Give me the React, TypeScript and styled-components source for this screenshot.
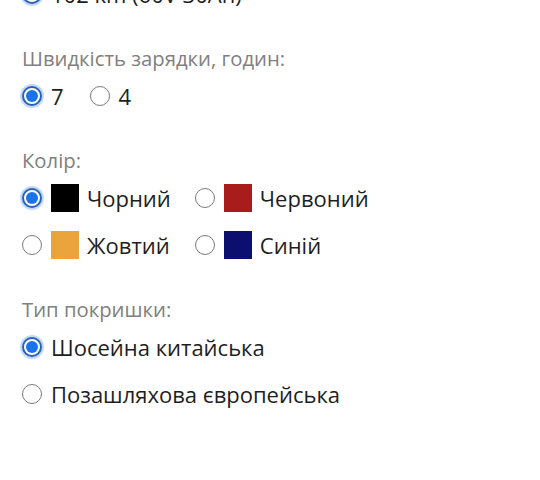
import React, { useState } from "react";
import styled, { createGlobalStyle } from "styled-components";

const GlobalStyle = createGlobalStyle`
  html, body {
    margin: 0;
    padding: 0;
    background: #ffffff;
    overflow: hidden;
  }
  body {
    font-family: "Open Sans", "Noto Sans", sans-serif;
    color: #222222;
  }
`;

// the page is shown scrolled a little, so the first group starts above the top edge
const Page = styled.div`
  padding: 0 22px;
  margin-top: -58px;
`;

const Section = styled.fieldset`
  border: 0;
  margin: 0 0 27px;
  padding: 0;
  min-width: 0;
`;

const Label = styled.div`
  font-size: 20.3px;
  line-height: 28px;
  color: #808080;
`;

const Inline = styled.div`
  display: flex;
  column-gap: 26px;
`;

const Grid = styled.div`
  display: grid;
  grid-template-columns: auto auto;
  justify-content: start;
  column-gap: 24px;
`;

const Option = styled.label`
  display: flex;
  align-items: center;
  height: 47px;
  font-size: 22px;
  color: #1e1e1e;
  cursor: pointer;
`;

const Radio = styled.input.attrs({ type: "radio" })`
  appearance: none;
  margin: 0 9px 0 0;
  width: 20px;
  height: 20px;
  flex: none;
  border-radius: 50%;
  border: 1px solid #7a7a7a;
  background: #ffffff;
  display: grid;
  place-items: center;
  cursor: pointer;

  &:checked {
    border: 2px solid #2a62b8;
    box-shadow: 0 0 0 2px rgba(120, 170, 240, 0.45);
  }
  &:checked::after {
    content: "";
    width: 12px;
    height: 12px;
    border-radius: 50%;
    background: #1a73e8;
  }
`;

const Swatch = styled.span<{ $color: string }>`
  width: 28px;
  height: 28px;
  flex: none;
  margin-right: 8px;
  background: ${(p) => p.$color};
`;

const range = ["102 km (60V 30Ah)"];
const charge = ["7", "4"];
const colors = [
  { name: "Чорний", hex: "#000000" },
  { name: "Червоний", hex: "#a81c1c" },
  { name: "Жовтий", hex: "#eba43c" },
  { name: "Синій", hex: "#0c0f6e" },
];
const tires = ["Шосейна китайська", "Позашляхова європейська"];

export default function App() {
  const [rng, setRng] = useState(range[0]);
  const [chg, setChg] = useState("7");
  const [col, setCol] = useState("Чорний");
  const [tire, setTire] = useState(tires[0]);

  return (
    <>
      <GlobalStyle />
      <Page>
        <Section>
          <Label>Запас ходу:</Label>
          {range.map((r) => (
            <Option key={r}>
              <Radio name="range" checked={rng === r} onChange={() => setRng(r)} />
              {r}
            </Option>
          ))}
        </Section>

        <Section>
          <Label>Швидкість зарядки, годин:</Label>
          <Inline>
            {charge.map((c) => (
              <Option key={c}>
                <Radio name="charge" checked={chg === c} onChange={() => setChg(c)} />
                {c}
              </Option>
            ))}
          </Inline>
        </Section>

        <Section>
          <Label>Колір:</Label>
          <Grid>
            {colors.map((c) => (
              <Option key={c.name}>
                <Radio name="color" checked={col === c.name} onChange={() => setCol(c.name)} />
                <Swatch $color={c.hex} />
                {c.name}
              </Option>
            ))}
          </Grid>
        </Section>

        <Section>
          <Label>Тип покришки:</Label>
          {tires.map((t) => (
            <Option key={t}>
              <Radio name="tire" checked={tire === t} onChange={() => setTire(t)} />
              {t}
            </Option>
          ))}
        </Section>
      </Page>
    </>
  );
}
